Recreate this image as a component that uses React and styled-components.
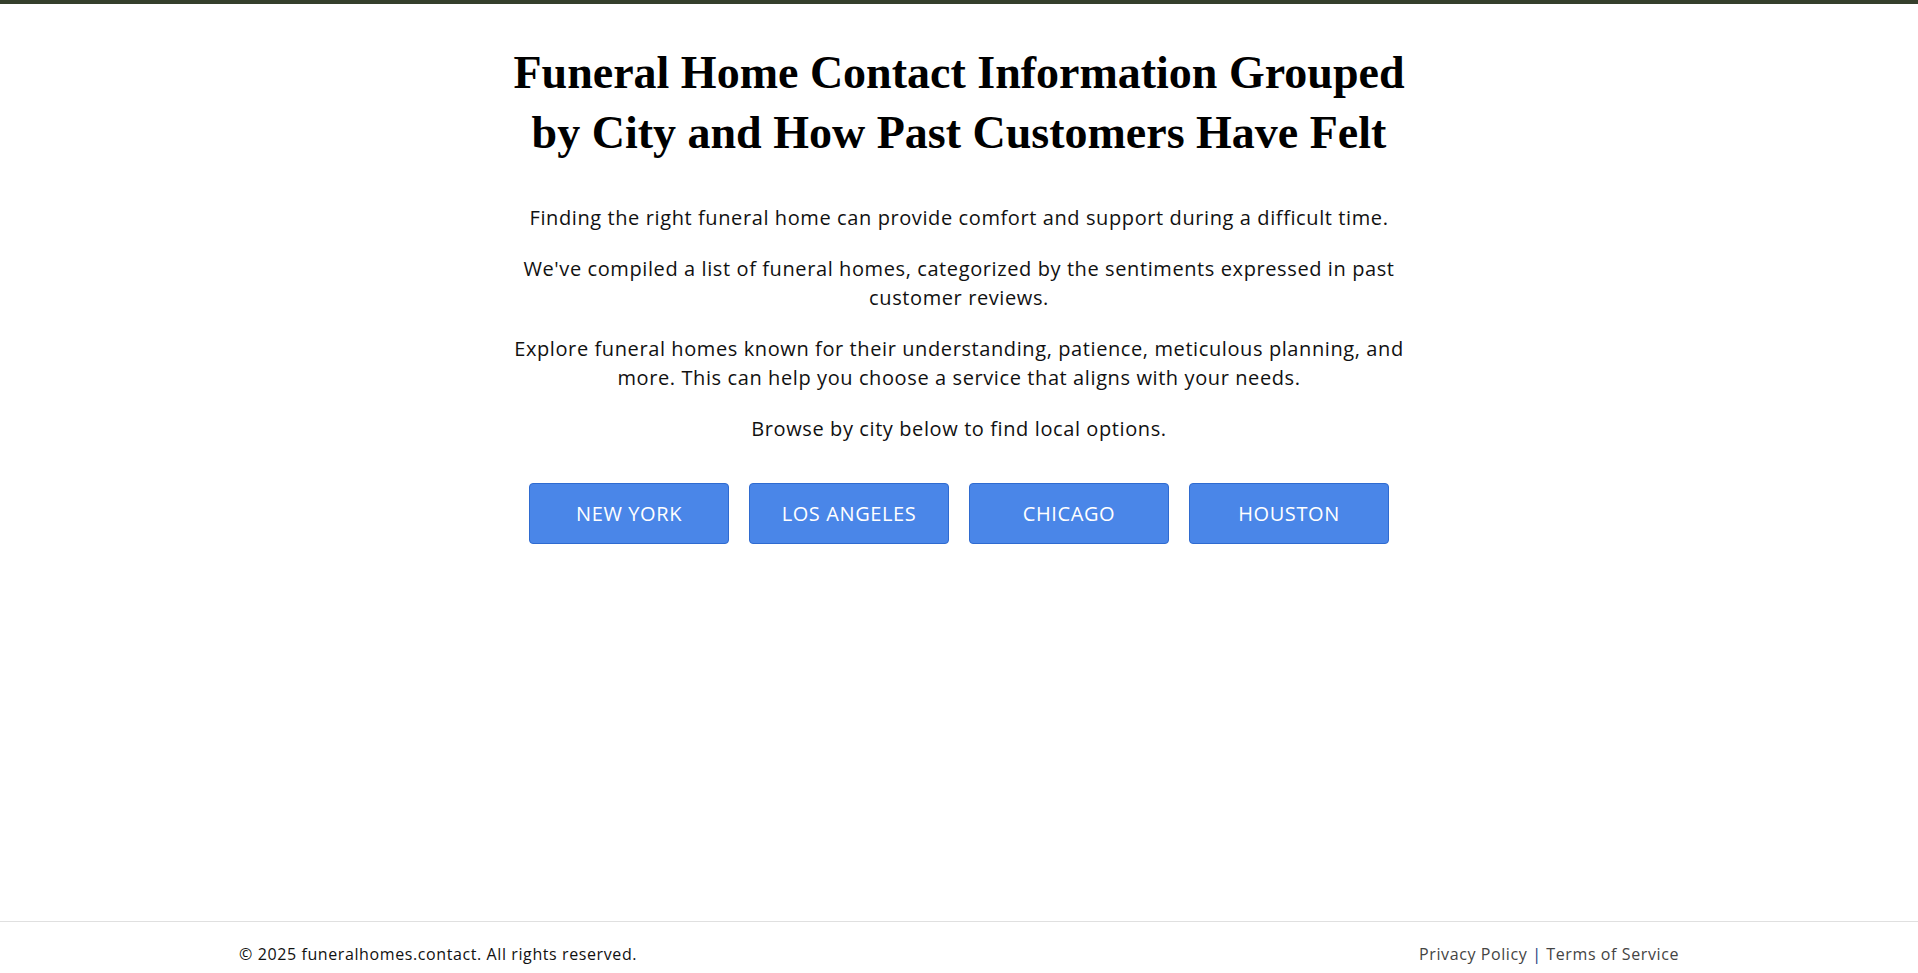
import styled, { createGlobalStyle } from "styled-components";

const GlobalStyle = createGlobalStyle`
  html, body {
    margin: 0;
    padding: 0;
    background: #fff;
  }
  body {
    font-family: "Open Sans", "Liberation Sans", sans-serif;
    color: #111;
  }
`;

const cities = ["New York", "Los Angeles", "Chicago", "Houston"];

export default function App() {
  return (
    <Page>
      <GlobalStyle />
      <TopBar />
      <Main>
        <Title>Funeral Home Contact Information Grouped by City and How Past Customers Have Felt</Title>
        <Intro>
          <p>Finding the right funeral home can provide comfort and support during a difficult time.</p>
          <p>We've compiled a list of funeral homes, categorized by the sentiments expressed in past customer reviews.</p>
          <p>
            Explore funeral homes known for their understanding, patience, meticulous planning, and more. This can
            help you choose a service that aligns with your needs.
          </p>
          <p>Browse by city below to find local options.</p>
        </Intro>
        <CityList>
          {cities.map((c) => (
            <CityButton key={c} href="#">
              {c}
            </CityButton>
          ))}
        </CityList>
      </Main>
      <Footer>
        <FooterInner>
          <span>© 2025 funeralhomes.contact. All rights reserved.</span>
          <Links>
            <a href="#">Privacy Policy</a> <Sep>|</Sep> <a href="#">Terms of Service</a>
          </Links>
        </FooterInner>
      </Footer>
    </Page>
  );
}

const Page = styled.div`
  min-height: 100vh;
  display: flex;
  flex-direction: column;
`;

const TopBar = styled.div`
  height: 4px;
  background: #353f2c;
`;

const Main = styled.main`
  flex: 1;
  width: 900px;
  margin: 0 auto;
  padding-top: 39px;
  text-align: center;
`;

const Title = styled.h1`
  margin: 0 auto;
  width: 900px;
  font-family: "Liberation Serif", "DejaVu Serif", serif;
  font-weight: 700;
  font-size: 46px;
  line-height: 60px;
  color: #000;
`;

const Intro = styled.div`
  margin-top: 40px;
  p {
    margin: 0 0 22px;
    font-size: 20px;
    line-height: 29px;
    letter-spacing: 0.6px;
    color: #111;
  }
`;

const CityList = styled.div`
  display: flex;
  justify-content: center;
  gap: 20px;
  margin-top: 40px;
`;

const CityButton = styled.a`
  width: 200px;
  height: 61px;
  box-sizing: border-box;
  display: flex;
  align-items: center;
  justify-content: center;
  background: #4a86e8;
  border: 1px solid #2f6bd0;
  border-radius: 4px;
  color: #fff;
  text-decoration: none;
  text-transform: uppercase;
  font-size: 20px;
  letter-spacing: 0.6px;
`;

const Footer = styled.footer`
  border-top: 1px solid #e0e0e0;
  padding: 22px 0 9px;
`;

const FooterInner = styled.div`
  width: 1440px;
  margin: 0 auto;
  display: flex;
  justify-content: space-between;
  font-size: 16px;
  line-height: 20px;
  letter-spacing: 0.6px;
  color: #111;
`;

const Links = styled.div`
  a {
    color: #444;
    text-decoration: none;
  }
`;

const Sep = styled.span`
  color: #1a3a7a;
`;
